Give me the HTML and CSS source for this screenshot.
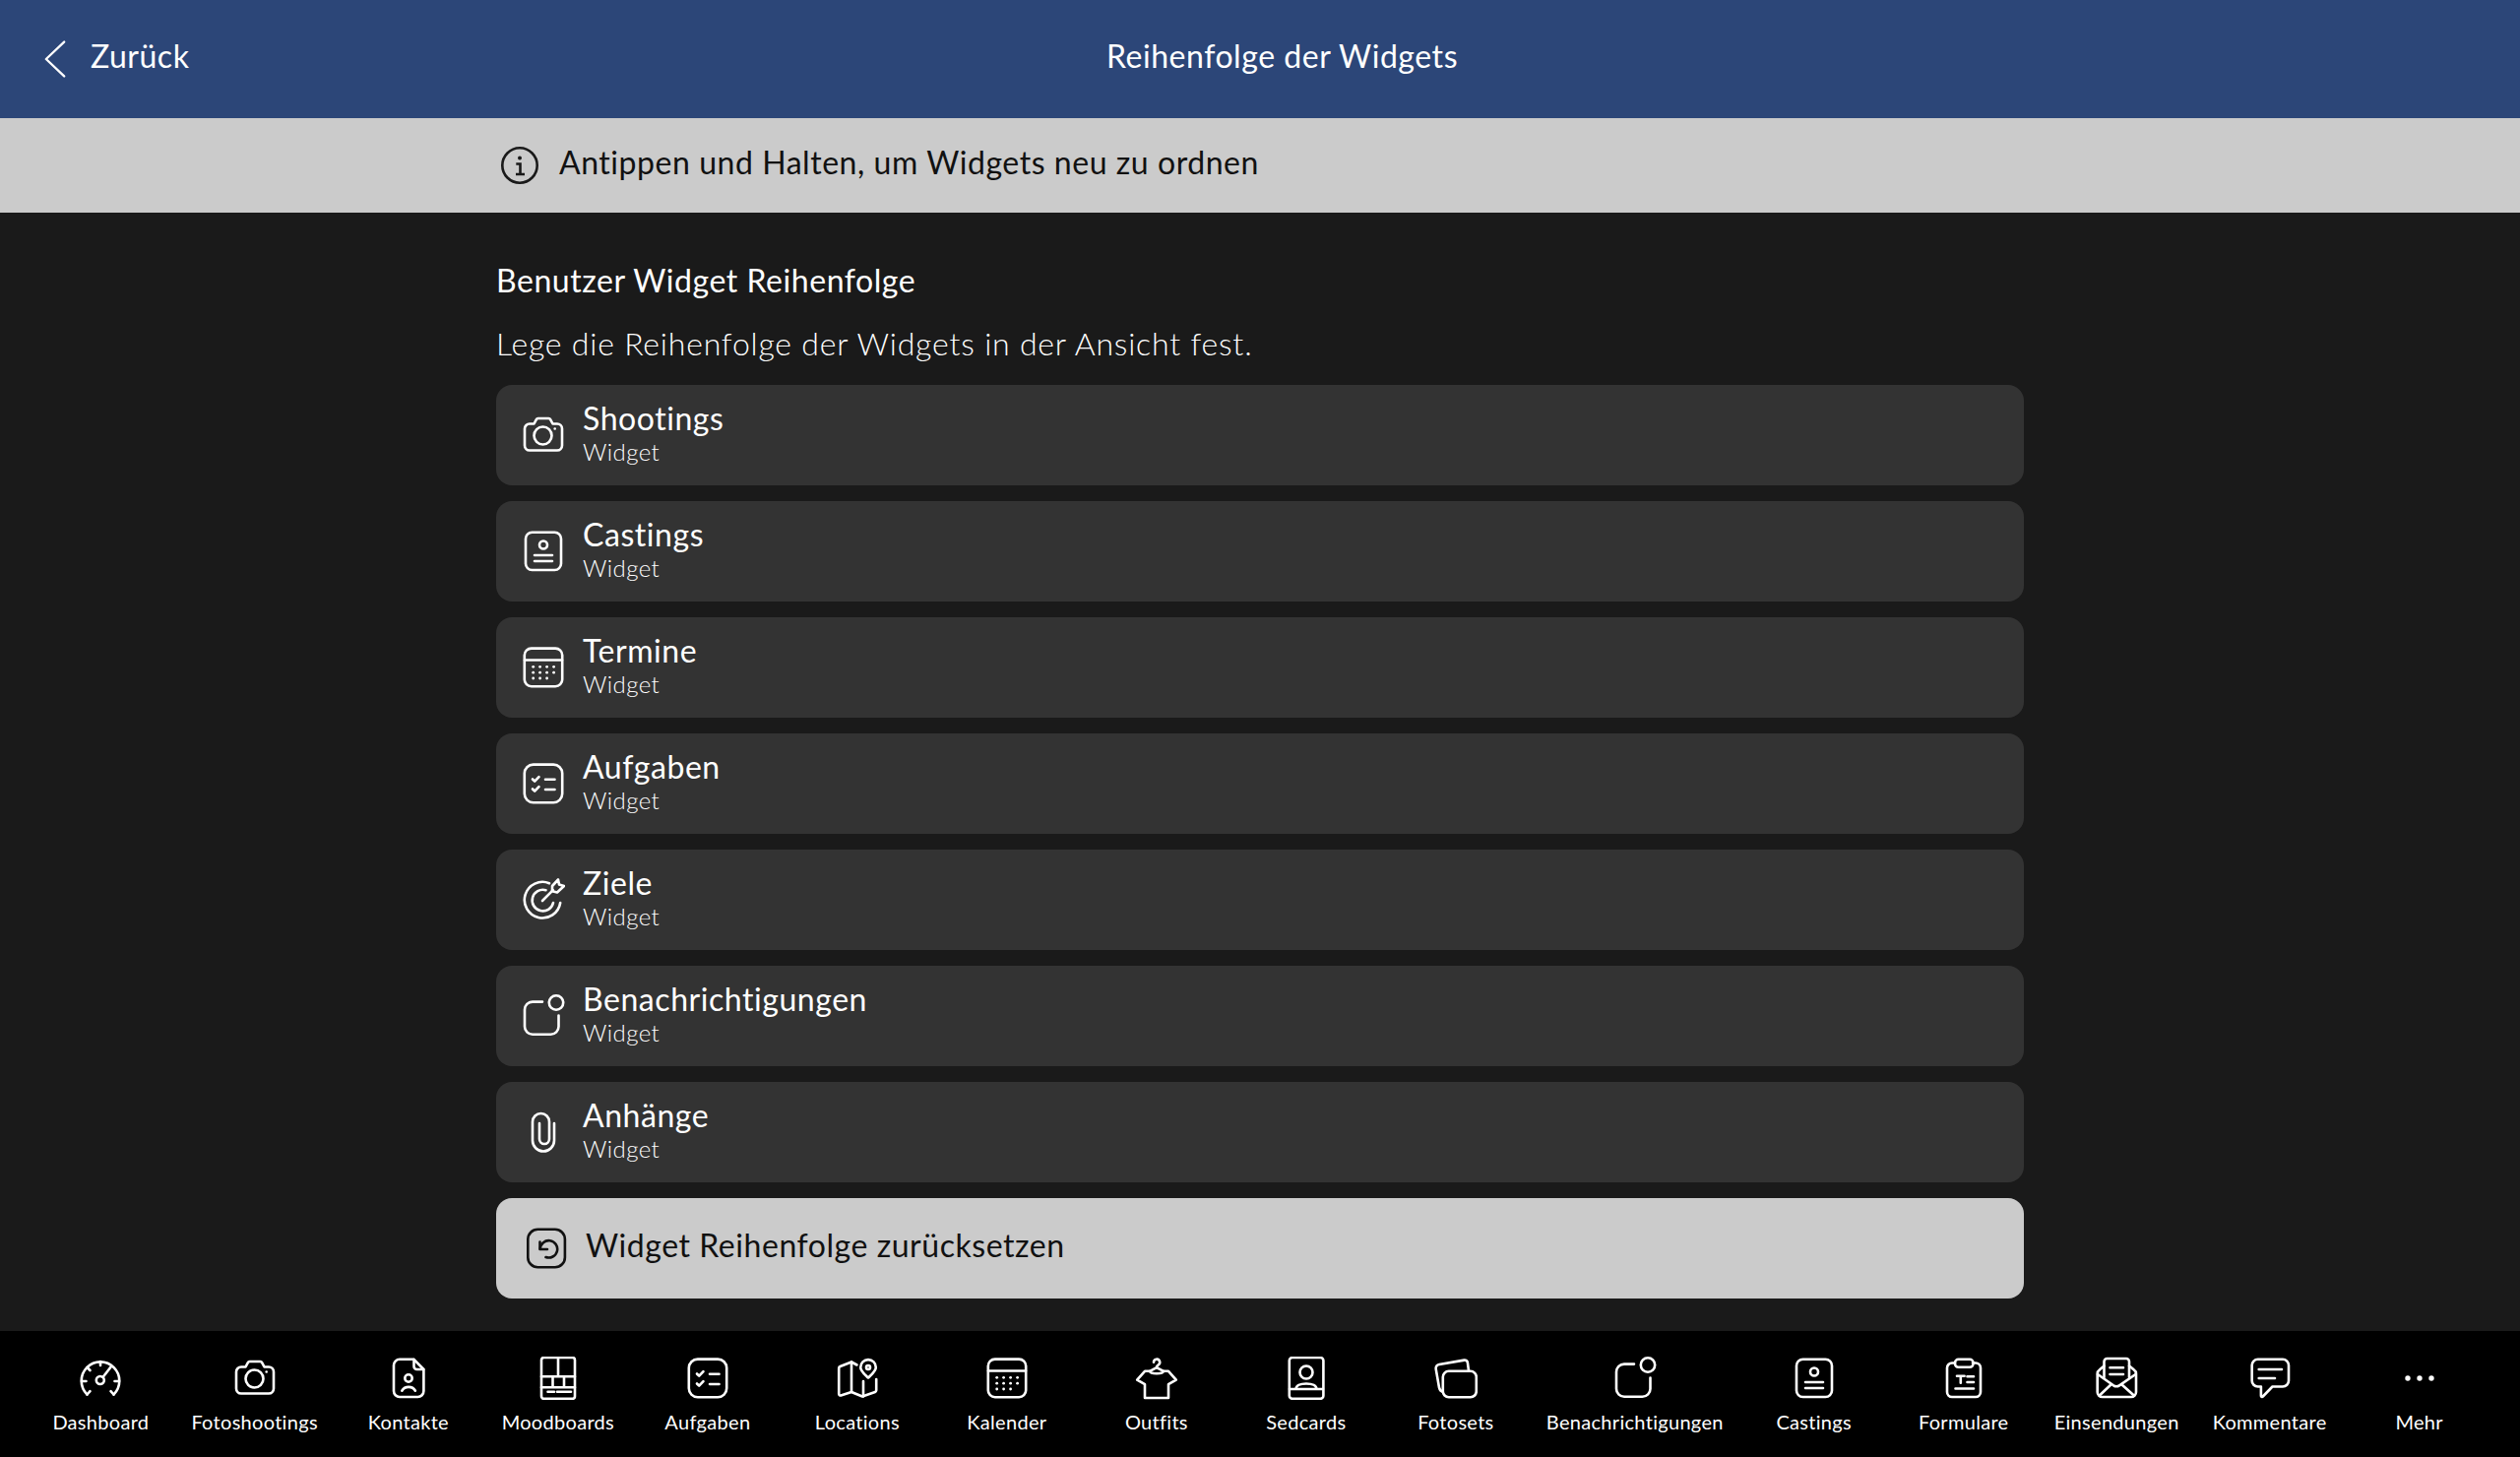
FILE: index.html
```html
<!DOCTYPE html>
<html lang="de">
<head>
<meta charset="utf-8">
<title>Reihenfolge der Widgets</title>
<link rel="stylesheet" href="styles.css">
</head>
<body>
<svg class="defs" width="0" height="0" aria-hidden="true">
  <symbol id="i-camera" viewBox="0 0 44 44"><path d="M8 10.5h4.5l2.2-4.2a2.4 2.4 0 0 1 2-1.3h10.6a2.4 2.4 0 0 1 2 1.3l2.2 4.2H36a5 5 0 0 1 5 5v17a5 5 0 0 1-5 5H8a5 5 0 0 1-5-5v-17a5 5 0 0 1 5-5z"/><circle cx="21.5" cy="22.5" r="9"/><circle class="f" cx="33.7" cy="15.5" r="1.3"/></symbol>
  <symbol id="i-casting" viewBox="0 0 44 44"><rect x="4" y="2.8" width="36" height="38.2" rx="6.5"/><circle cx="22" cy="15.5" r="4"/><path d="M13 26h18M13 32h18"/></symbol>
  <symbol id="i-calendar" viewBox="0 0 44 44"><rect x="2.8" y="2.6" width="38.4" height="38.6" rx="7"/><path d="M3 14.5h38"/><g class="f"><circle cx="11.7" cy="21.3" r="1.4"/><circle cx="18.6" cy="21.3" r="1.4"/><circle cx="25.6" cy="21.3" r="1.4"/><circle cx="32.6" cy="21.3" r="1.4"/><circle cx="11.7" cy="27.2" r="1.4"/><circle cx="18.6" cy="27.2" r="1.4"/><circle cx="25.6" cy="27.2" r="1.4"/><circle cx="32.6" cy="27.2" r="1.4"/><circle cx="11.7" cy="33" r="1.4"/><circle cx="18.6" cy="33" r="1.4"/><circle cx="25.6" cy="33" r="1.4"/></g></symbol>
  <symbol id="i-tasks" viewBox="0 0 44 44"><rect x="2.8" y="2.6" width="38.4" height="38.6" rx="9"/><path d="M11 17.5l2.2 2.2 4.3-4.5M11 27.5l2.2 2.2 4.3-4.5M24 17.7h9.5M24 28h9.5"/></symbol>
  <symbol id="i-target" viewBox="0 0 44 44"><path d="M28 5.2A18.3 18.3 0 1 0 39.2 25"/><path d="M24.5 12.2A10.8 10.8 0 1 0 32 25"/><path d="M21 23l10.8-10.8"/><path d="M31 8l6-6.5 1 5 5 1.5-7 6.5-5-1.2z"/></symbol>
  <symbol id="i-notify" viewBox="0 0 44 44"><path d="M21 7.6H11a8 8 0 0 0-8 8V32.7a8 8 0 0 0 8 8h18.5a8 8 0 0 0 8-8V21.5"/><circle cx="35" cy="8.5" r="7.2"/></symbol>
  <symbol id="i-clip" viewBox="0 0 44 44"><path d="M33 13v17.5a11 11 0 0 1-22 0V11.5a8.5 8.5 0 0 1 17 0V29a5 5 0 0 1-10 0V13"/></symbol>
  <symbol id="i-reset" viewBox="0 0 44 44"><rect x="3.3" y="2.8" width="37.6" height="38.4" rx="10"/><path d="M15.5 15.5V23H23"/><path d="M15.8 22.5A8.7 8.7 0 1 1 21.5 31"/></symbol>
  <symbol id="i-gauge" viewBox="0 0 44 44"><path d="M8.5 38.5A19.3 19.3 0 1 1 35.5 38.5"/><circle cx="21.8" cy="24" r="4"/><path d="M24.5 21L33 10M22 5v4M8.5 11l3 3M3 25h4.5M36.5 25H41M8.5 38.5l3-3.4M35.5 38.5l-3-3.4"/></symbol>
  <symbol id="i-doc" viewBox="0 0 44 44"><path d="M13 2.8h14.5L37.4 13v22a6 6 0 0 1-6 6H13a6 6 0 0 1-6-6V8.8a6 6 0 0 1 6-6z"/><path d="M27.5 3v7a3 3 0 0 0 3 3h6.7"/><circle cx="22" cy="22" r="3.7"/><path d="M15.3 34.7a8 8 0 0 1 13.6 0"/></symbol>
  <symbol id="i-mood" viewBox="0 0 44 44"><rect x="5" y="1" width="34" height="41.8" rx="2.5"/><path d="M5 20.3h34M22 1v19.3M16.5 20.3v11M28 20.3v11M5 31.3h34M11.5 35.8H18M21 35.8h14"/></symbol>
  <symbol id="i-map" viewBox="0 0 44 44"><path d="M21.5 8.5L16 5.5 4.5 10a2 2 0 0 0-1.3 1.8V38a1.5 1.5 0 0 0 2 1.4L16 36l11 4.5 13-4.6a1.8 1.8 0 0 0 1.2-1.7V23"/><path d="M16 5.5V36M28 25v15.5"/><path d="M33 21.5c-3.6-3.5-7.8-6.8-7.8-10.6a7.8 7.8 0 0 1 15.6 0c0 3.8-4.2 7.1-7.8 10.6z"/><circle cx="33" cy="11" r="2"/></symbol>
  <symbol id="i-shirt" viewBox="0 0 44 44"><path d="M15 14.8h-5L2.2 23.7l7.8 4.5V42h24V28.2l7.8-4.5L34 14.8h-5"/><path d="M19 5.8a3.1 3.1 0 1 1 4.6 2.7c-1 .6-1.6 1.2-1.6 2.7"/><path d="M22 11.2l-7 3.6c1 3.2 13 3.2 14 0z"/></symbol>
  <symbol id="i-sedcard" viewBox="0 0 44 44"><rect x="4.8" y="1" width="34.6" height="41.8" rx="3"/><circle cx="22" cy="16" r="6.5"/><path d="M11.6 33c0-3.3 4-5.5 10.4-5.5S32.400 29.700 32.400 33M5 33h34"/></symbol>
  <symbol id="i-sets" viewBox="0 0 44 44"><rect x="8.800" y="14.800" width="34" height="26.500" rx="6"/><path d="M35 14.500l-1.100-8.300a3 3 0 0 0-3.500-2.600L5 8a4 4 0 0 0-3.300 4.600L5 31.500a6 6 0 0 0 3.800 4.500"/></symbol>
  <symbol id="i-form" viewBox="0 0 44 44"><path d="M13 6.500H10a5 5 0 0 0-5 5V36a5 5 0 0 0 5 5h24a5 5 0 0 0 5-5V11.500a5 5 0 0 0-5-5h-3"/><rect x="13" y="2.800" width="18.500" height="8" rx="3.500"/><path d="M15 19.700h7.600M18.800 19.700v7M25.500 20.300H32M25.500 26H32M13.500 32.500H32"/></symbol>
  <symbol id="i-mail" viewBox="0 0 44 44"><path d="M9.500 21V5a3 3 0 0 1 3-3H32a3 3 0 0 1 3 3v16"/><path d="M15.500 11.300H29M15.500 18H29"/><path d="M9.500 9.500L5 13.300a5 5 0 0 0-2.300 4.200V36a5 5 0 0 0 5 5H37a5 5 0 0 0 5-5V17.500a5 5 0 0 0-2.300-4.200L35 9.500"/><path d="M3 18l16 11.300q3 2 6 0L41.500 18M4.800 39.500L17 28M39.800 39.500L27 28"/></symbol>
  <symbol id="i-comment" viewBox="0 0 44 44"><path d="M9.700 2.800H35a6 6 0 0 1 6 6v15.700a6 6 0 0 1-6 6H24.500l-9.700 10a1.100 1.100 0 0 1-1.900-.8v-9.200H9.700a6 6 0 0 1-6-6V8.800a6 6 0 0 1 6-6z"/><path d="M10.700 13H34M10.700 22H27"/></symbol>
  <symbol id="i-more" viewBox="0 0 44 44"><g class="f"><circle cx="10" cy="22" r="2.700"/><circle cx="22" cy="22" r="2.700"/><circle cx="34" cy="22" r="2.700"/></g></symbol>
</svg>

<header class="topbar">
  <a class="back">
    <svg class="chevron" viewBox="0 0 24 40"><path d="M22 1L2 20l20 19"/></svg>
    <span>Zurück</span>
  </a>
  <h1>Reihenfolge der Widgets</h1>
  <span></span>
</header>

<div class="hint">
  <svg class="info" viewBox="0 0 40 40"><circle cx="20" cy="20" r="17.700"/><circle class="dot" cx="20" cy="12.500" r="2"/><path d="M16.300 18.500H20.500V28.500M16 29h9"/></svg>
  <span class="shift">Antippen und Halten, um Widgets neu zu ordnen</span>
</div>

<main class="content">
  <h2>Benutzer Widget Reihenfolge</h2>
  <p class="lead">Lege die Reihenfolge der Widgets in der Ansicht fest.</p>
  <ul class="list">
    <li class="row"><svg class="ico"><use href="#i-camera"/></svg><div class="txt"><b>Shootings</b><small>Widget</small></div></li>
    <li class="row"><svg class="ico"><use href="#i-casting"/></svg><div class="txt"><b>Castings</b><small>Widget</small></div></li>
    <li class="row"><svg class="ico"><use href="#i-calendar"/></svg><div class="txt"><b>Termine</b><small>Widget</small></div></li>
    <li class="row"><svg class="ico"><use href="#i-tasks"/></svg><div class="txt"><b>Aufgaben</b><small>Widget</small></div></li>
    <li class="row"><svg class="ico"><use href="#i-target"/></svg><div class="txt"><b>Ziele</b><small>Widget</small></div></li>
    <li class="row"><svg class="ico"><use href="#i-notify"/></svg><div class="txt"><b>Benachrichtigungen</b><small>Widget</small></div></li>
    <li class="row"><svg class="ico"><use href="#i-clip"/></svg><div class="txt"><b>Anhänge</b><small>Widget</small></div></li>
    <li class="reset"><svg class="ico"><use href="#i-reset"/></svg><span class="shift">Widget Reihenfolge zurücksetzen</span></li>
  </ul>
</main>

<nav class="tabs">
  <a class="tab"><svg class="ico"><use href="#i-gauge"/></svg><span>Dashboard</span></a>
  <a class="tab"><svg class="ico"><use href="#i-camera"/></svg><span>Fotoshootings</span></a>
  <a class="tab"><svg class="ico"><use href="#i-doc"/></svg><span>Kontakte</span></a>
  <a class="tab"><svg class="ico"><use href="#i-mood"/></svg><span>Moodboards</span></a>
  <a class="tab"><svg class="ico"><use href="#i-tasks"/></svg><span>Aufgaben</span></a>
  <a class="tab"><svg class="ico"><use href="#i-map"/></svg><span>Locations</span></a>
  <a class="tab"><svg class="ico"><use href="#i-calendar"/></svg><span>Kalender</span></a>
  <a class="tab"><svg class="ico"><use href="#i-shirt"/></svg><span>Outfits</span></a>
  <a class="tab"><svg class="ico"><use href="#i-sedcard"/></svg><span>Sedcards</span></a>
  <a class="tab"><svg class="ico"><use href="#i-sets"/></svg><span>Fotosets</span></a>
  <a class="tab"><svg class="ico"><use href="#i-notify"/></svg><span>Benachrichtigungen</span></a>
  <a class="tab"><svg class="ico"><use href="#i-casting"/></svg><span>Castings</span></a>
  <a class="tab"><svg class="ico"><use href="#i-form"/></svg><span>Formulare</span></a>
  <a class="tab"><svg class="ico"><use href="#i-mail"/></svg><span>Einsendungen</span></a>
  <a class="tab"><svg class="ico"><use href="#i-comment"/></svg><span>Kommentare</span></a>
  <a class="tab"><svg class="ico"><use href="#i-more"/></svg><span>Mehr</span></a>
</nav>
</body>
</html>
```
FILE: styles.css
```css
* { box-sizing: border-box; }
html, body { margin: 0; height: 100%; }
body {
  display: flex;
  flex-direction: column;
  height: 1480px;
  background: #1a1a1a;
  color: #fff;
  font-family: "Lato", "Open Sans", sans-serif;
  font-size: 32px;
  line-height: 40px;
  overflow: hidden;
}
.defs { position: absolute; }
.ico {
  width: 44px;
  height: 44px;
  flex: none;
  display: block;
  fill: none;
  stroke: currentColor;
  stroke-width: 2.6;
  stroke-linecap: round;
  stroke-linejoin: round;
}
symbol .f { fill: currentColor; stroke: none; }

.topbar {
  height: 120px;
  flex: none;
  display: grid;
  grid-template-columns: 1fr auto 1fr;
  align-items: center;
  padding: 0 0 6px 45px;
  background: #2c4678;
}
.back { display: flex; align-items: center; gap: 25px; letter-spacing: 0.5px; }
.chevron {
  width: 22px;
  height: 38px;
  margin-top: 6px;
  fill: none;
  stroke: #fff;
  stroke-width: 2.500;
  stroke-linecap: round;
  stroke-linejoin: round;
}
.topbar h1 { margin: 0; font: inherit; letter-spacing: 0.55px; }

.hint {
  height: 96px;
  flex: none;
  display: flex;
  align-items: center;
  gap: 20px;
  padding-left: 508px;
  background: #cbcbcb;
  color: #111;
  letter-spacing: 0.55px;
}
.info {
  width: 40px;
  height: 40px;
  flex: none;
  fill: none;
  stroke: #1a1a1a;
  stroke-width: 2.600;
}
.info .dot { fill: #1a1a1a; stroke: none; }
.shift { padding-bottom: 6px; }

.content { flex: 1; padding: 49px 504px 0; }
.content h2 { margin: 0; font: inherit; letter-spacing: 0.55px; }
.lead { margin: 24px 0 22px; font-weight: 300; letter-spacing: 0.8px; }
.list { list-style: none; margin: 0; padding: 0; display: flex; flex-direction: column; gap: 16px; }
.row {
  height: 102px;
  display: flex;
  align-items: center;
  gap: 18px;
  padding-left: 26px;
  background: #333;
  border-radius: 16px;
}
.txt { display: flex; flex-direction: column; padding-bottom: 4px; }
.txt b { font-weight: 400; line-height: 38px; letter-spacing: 0.55px; }
.txt small { font-size: 24px; line-height: 30px; font-weight: 300; letter-spacing: 0.4px; }
.reset {
  height: 102px;
  display: flex;
  align-items: center;
  gap: 18px;
  padding-left: 29px;
  background: #cbcbcb;
  color: #111;
  border-radius: 16px;
  letter-spacing: 0.55px;
}

.tabs {
  height: 128px;
  flex: none;
  display: flex;
  justify-content: center;
  padding-top: 26px;
  background: #000;
}
.tab {
  min-width: 152px;
  padding: 0 16px;
  display: flex;
  flex-direction: column;
  align-items: center;
  gap: 9px;
  font-size: 20px;
  line-height: 26px;
  white-space: nowrap;
  letter-spacing: 0.3px;
}
```
